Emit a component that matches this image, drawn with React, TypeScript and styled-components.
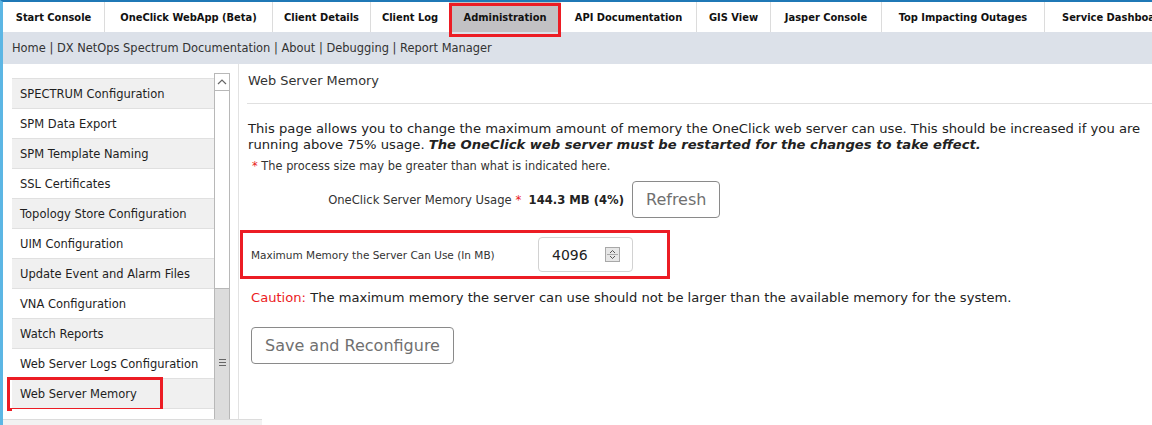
import styled, { createGlobalStyle } from 'styled-components';

const GlobalStyle = createGlobalStyle`
  html, body {
    margin: 0;
    padding: 0;
    background: #fff;
  }
  body {
    font-family: 'DejaVu Sans', Verdana, sans-serif;
    color: #222;
  }
`;

const tabs = [
  { label: 'Start Console', width: 102 },
  { label: 'OneClick WebApp (Beta)', width: 168 },
  { label: 'Client Details', width: 98 },
  { label: 'Client Log', width: 79 },
  { label: 'Administration', width: 111, active: true },
  { label: 'API Documentation', width: 136 },
  { label: 'GIS View', width: 74 },
  { label: 'Jasper Console', width: 111 },
  { label: 'Top Impacting Outages', width: 163 },
  { label: 'Service Dashboard', width: 140 },
];

const menuItems = [
  'SPECTRUM Configuration',
  'SPM Data Export',
  'SPM Template Naming',
  'SSL Certificates',
  'Topology Store Configuration',
  'UIM Configuration',
  'Update Event and Alarm Files',
  'VNA Configuration',
  'Watch Reports',
  'Web Server Logs Configuration',
  'Web Server Memory',
  '',
];

export default function App() {
  return (
    <>
      <GlobalStyle />
      <Page>
        <TabBar>
          {tabs.map((t) => (
            <Tab key={t.label} $width={t.width} $active={!!t.active}>
              {t.label}
            </Tab>
          ))}
        </TabBar>

        <SubNav>
          Home | DX NetOps Spectrum Documentation | About | Debugging | Report Manager
        </SubNav>

        <Body>
          <Sidebar>
            <MenuList>
              {menuItems.map((item, i) => (
                <MenuItem key={i} $striped={i % 2 === 0} $marked={item === 'Web Server Memory'}>
                  {item}
                </MenuItem>
              ))}
            </MenuList>
            <ScrollBar>
              <ScrollButton>
                <svg width="10" height="6" viewBox="0 0 10 6">
                  <path d="M1 5 L5 1 L9 5" fill="none" stroke="#666" strokeWidth="1.2" />
                </svg>
              </ScrollButton>
              <ScrollTrack />
              <ScrollThumb>
                <Grip>
                  <span />
                  <span />
                  <span />
                </Grip>
              </ScrollThumb>
            </ScrollBar>
          </Sidebar>

          <Main>
            <Title>Web Server Memory</Title>
            <Divider />

            <Intro>
              This page allows you to change the maximum amount of memory the OneClick web server can use. This should be increased if you are
              <br />
              running above 75% usage. <strong><em>The OneClick web server must be restarted for the changes to take effect.</em></strong>
            </Intro>
            <Note>
              <Asterisk>*</Asterisk> The process size may be greater than what is indicated here.
            </Note>

            <UsageRow>
              <UsageLabel>
                OneClick Server Memory Usage <Asterisk>*</Asterisk>&nbsp; <b>144.3 MB (4%)</b>
              </UsageLabel>
              <GhostButton>Refresh</GhostButton>
            </UsageRow>

            <MaxBox>
              <MaxLabel>Maximum Memory the Server Can Use (In MB)</MaxLabel>
              <NumberField>
                <span>4096</span>
                <Spinner>
                  <svg width="13" height="13" viewBox="0 0 13 13">
                    <path d="M4 5 L6.5 2.5 L9 5" fill="none" stroke="#555" strokeWidth="1" />
                    <line x1="1" y1="6.5" x2="12" y2="6.5" stroke="#aaa" strokeWidth="1" />
                    <path d="M4 8 L6.5 10.5 L9 8" fill="none" stroke="#555" strokeWidth="1" />
                  </svg>
                </Spinner>
              </NumberField>
            </MaxBox>

            <Caution>
              <CautionWord>Caution:</CautionWord> The maximum memory the server can use should not be larger than the available memory for the system.
            </Caution>

            <GhostButton $wide>Save and Reconfigure</GhostButton>
          </Main>
        </Body>

        <HScroll />
      </Page>
    </>
  );
}

// Styled Components

const Page = styled.div`
  position: relative;
  width: 1152px;
  height: 425px;
  overflow: hidden;
  border-top: 2px solid #1f78b6;
  border-left: 3px solid #5cb6e4;
  box-sizing: border-box;
`;

const TabBar = styled.div`
  display: flex;
  height: 30px;
  background: #fff;
  white-space: nowrap;
`;

const Tab = styled.div<{ $width: number; $active: boolean }>`
  position: relative;
  flex: 0 0 ${({ $width }) => $width}px;
  display: flex;
  align-items: center;
  justify-content: center;
  box-sizing: border-box;
  border-right: 1px solid #dcdcdc;
  font-family: 'DejaVu Sans Condensed', 'DejaVu Sans', sans-serif;
  font-weight: 700;
  font-size: 11px;
  color: #111;
  background: ${({ $active }) => ($active ? '#c2c1c4' : '#fff')};

  ${({ $active }) =>
    $active &&
    `
    &::after {
      content: '';
      position: absolute;
      left: -1px;
      right: -1px;
      top: 1px;
      bottom: -5px;
      border: 3px solid #ec1c24;
      z-index: 2;
    }
  `}
`;

const SubNav = styled.div`
  height: 32px;
  display: flex;
  align-items: center;
  padding-left: 9px;
  background: #dce1e9;
  font-size: 11.45px;
  color: #333;
`;

const Body = styled.div`
  display: flex;
  height: 361px;
`;

const Sidebar = styled.div`
  flex: 0 0 236px;
  display: flex;
  align-items: flex-start;
  padding: 9px 0 0 9px;
  box-sizing: border-box;
  border-right: 1px solid #e2e2e2;
`;

const MenuList = styled.div`
  width: 202px;
  margin-top: 5px;
  border-top: 1px solid #e0e0e0;
`;

const MenuItem = styled.div<{ $striped: boolean; $marked: boolean }>`
  position: relative;
  height: 29px;
  display: flex;
  align-items: center;
  padding-left: 8px;
  border-bottom: 1px solid #e0e0e0;
  background: ${({ $striped }) => ($striped ? '#f0f0f0' : '#fff')};
  font-size: 11.5px;
  color: #1e1e1e;
  white-space: nowrap;

  ${({ $marked }) =>
    $marked &&
    `
    &::after {
      content: '';
      position: absolute;
      left: -5px;
      top: -2px;
      width: 156px;
      height: 34px;
      box-sizing: border-box;
      border: 3px solid #ec1c24;
    }
  `}
`;

const ScrollBar = styled.div`
  width: 16px;
  height: 360px;
  display: flex;
  flex-direction: column;
  border: 1px solid #b8b8b8;
  box-sizing: border-box;
  background: #fff;
`;

const ScrollButton = styled.div`
  height: 16px;
  display: flex;
  align-items: center;
  justify-content: center;
  border-bottom: 1px solid #b8b8b8;
`;

const ScrollTrack = styled.div`
  height: 197px;
`;

const ScrollThumb = styled.div`
  flex: 1;
  display: flex;
  justify-content: center;
  padding-top: 70px;
  background: #dcdcdc;
  border-top: 1px solid #b8b8b8;
`;

const Grip = styled.div`
  display: flex;
  flex-direction: column;
  gap: 2px;

  span {
    display: block;
    width: 7px;
    height: 1px;
    background: #666;
  }
`;

const Main = styled.div`
  flex: 1;
  padding: 9px 0 0 9px;
  font-size: 13px;
  color: #222;
`;

const Title = styled.div`
  font-size: 12.9px;
  line-height: 16px;
  color: #333;
`;

const Divider = styled.div`
  height: 1px;
  margin: 14px 0 17px -1px;
  background: #e0e0e0;
`;

const Intro = styled.p`
  margin: 0;
  font-size: 13.15px;
  line-height: 16px;
  white-space: nowrap;
  color: #222;

  strong {
    font-weight: 700;
  }
`;

const Note = styled.div`
  margin: 6px 0 0 4px;
  font-size: 11.4px;
  line-height: 14px;
  color: #333;
`;

const Asterisk = styled.span`
  color: #e8201c;
`;

const UsageRow = styled.div`
  display: flex;
  align-items: center;
  gap: 8px;
  margin-top: 8px;
`;

const UsageLabel = styled.div`
  width: 376px;
  text-align: right;
  font-size: 11.6px;
  color: #333;
  white-space: nowrap;

  b {
    font-weight: 700;
    color: #222;
  }
`;

const GhostButton = styled.div<{ $wide?: boolean }>`
  display: inline-flex;
  align-items: center;
  justify-content: center;
  height: 37px;
  padding: 0 13px;
  box-sizing: border-box;
  border: 1px solid #8a8a8a;
  border-radius: 4px;
  background: #fff;
  font-size: 16px;
  color: #707070;
  margin-left: ${({ $wide }) => ($wide ? '3px' : '0')};
`;

const MaxBox = styled.div`
  display: flex;
  align-items: center;
  margin: 12px 0 0 -8px;
  height: 49px;
  width: 430px;
  padding: 0 0 0 8px;
  box-sizing: border-box;
  border: 3px solid #ec1c24;
`;

const MaxLabel = styled.div`
  width: 287px;
  font-size: 10.5px;
  color: #333;
  white-space: nowrap;
`;

const NumberField = styled.div`
  width: 95px;
  height: 35px;
  display: flex;
  align-items: center;
  justify-content: space-between;
  padding: 0 12px 0 13px;
  box-sizing: border-box;
  border: 1px solid #d2d2d2;
  border-radius: 4px;
  font-size: 14px;
  color: #222;
`;

const Spinner = styled.div`
  width: 15px;
  height: 15px;
  display: flex;
  align-items: center;
  justify-content: center;
  background: #e6e6e6;
  border: 1px solid #a8a8a8;
  box-sizing: border-box;
`;

const Caution = styled.div`
  margin: 11px 0 21px 3px;
  font-size: 13.1px;
  line-height: 16px;
  white-space: nowrap;
  color: #222;
`;

const CautionWord = styled.span`
  color: #ec1c24;
`;

const HScroll = styled.div`
  position: absolute;
  left: -3px;
  bottom: 0;
  width: 262px;
  height: 5px;
  background: #f2f2f2;
  border-top: 1px solid #dcdcdc;
`;
